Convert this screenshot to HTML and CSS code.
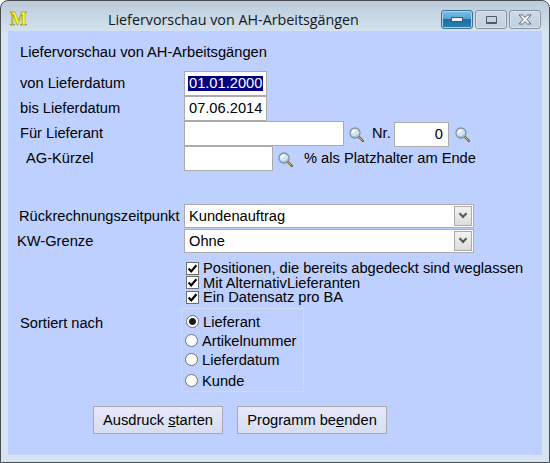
FILE: index.html
```html
<!DOCTYPE html>
<html lang="de">

<head>
    <meta charset="UTF-8">
    <title>Liefervorschau von AH-Arbeitsgängen</title>
    <link rel="stylesheet" href="styles.css">
</head>

<body>
    <svg class="defs" width="0" height="0">
        <defs>
            <symbol id="lens" viewBox="0 0 15 15">
                <line x1="9.5" y1="9.5" x2="14" y2="14" stroke="#7a5a20" stroke-width="2.4" stroke-linecap="round"/>
                <line x1="10" y1="10" x2="13.6" y2="13.6" stroke="#e0b860" stroke-width="1"/>
                <circle cx="6" cy="6" r="5" fill="#d4e6f2" stroke="#7f919f" stroke-width="1.3"/>
                <path d="M2.6 6 A3.4 3.4 0 0 1 6 2.6 L6 4.4 A2 2 0 0 0 4.2 6 Z" fill="#fff"/>
                <path d="M3.5 8.8 A4 4 0 0 0 9.6 6.4" fill="none" stroke="#9fc0da" stroke-width="1.2"/>
            </symbol>
            <symbol id="tick" viewBox="0 0 13 13">
                <path d="M2.6 6.6 L5.2 9.4 L10.4 3.2" fill="none" stroke="#000" stroke-width="2.2"/>
            </symbol>
        </defs>
    </svg>

    <div class="window">
        <div class="titlebar">
            <span class="app-logo">M</span>
            <span class="title">Liefervorschau von AH-Arbeitsgängen</span>
            <div class="win-buttons">
                <div class="win-btn win-min"><span class="glyph-min"></span></div>
                <div class="win-btn"><span class="glyph-max"></span></div>
                <div class="win-btn">
                    <svg width="16" height="11" viewBox="0 0 16 11">
                        <path d="M2 1 H5.5 L8 3.4 L10.5 1 H14 L10 5.5 L14 10 H10.5 L8 7.6 L5.5 10 H2 L6 5.5 Z" fill="#f4f6f8" stroke="#5c6672" stroke-width="1"/>
                    </svg>
                </div>
            </div>
        </div>

        <div class="client">
            <div class="heading">Liefervorschau von AH-Arbeitsgängen</div>

            <div class="rows">
                <div class="row">
                    <label class="label">von Lieferdatum</label>
                    <div class="field w-date"><span class="selected">01.01.2000</span></div>
                </div>
                <div class="row">
                    <label class="label">bis Lieferdatum</label>
                    <div class="field w-date">07.06.2014</div>
                </div>
                <div class="row">
                    <label class="label">Für Lieferant</label>
                    <div class="field w-supplier"></div>
                    <svg class="lens"><use href="#lens"/></svg>
                    <span class="nr-label">Nr.</span>
                    <div class="field w-nr">0</div>
                    <svg class="lens"><use href="#lens"/></svg>
                </div>
                <div class="row">
                    <label class="label indent">AG-Kürzel</label>
                    <div class="field w-short"></div>
                    <svg class="lens"><use href="#lens"/></svg>
                    <span class="hint">% als Platzhalter am Ende</span>
                </div>
            </div>

            <div class="selects">
                <div class="row select-row">
                    <label class="label nudge">Rückrechnungszeitpunkt</label>
                    <div class="field w-select">Kundenauftrag<span class="arrow"></span></div>
                </div>
                <div class="row select-row">
                    <label class="label outdent">KW-Grenze</label>
                    <div class="field w-select">Ohne<span class="arrow"></span></div>
                </div>
            </div>

            <div class="checks">
                <div class="check"><span class="box"><svg width="13" height="13"><use href="#tick"/></svg></span>Positionen, die bereits abgedeckt sind weglassen</div>
                <div class="check"><span class="box"><svg width="13" height="13"><use href="#tick"/></svg></span>Mit AlternativLieferanten</div>
                <div class="check"><span class="box"><svg width="13" height="13"><use href="#tick"/></svg></span>Ein Datensatz pro BA</div>
            </div>

            <div class="sort">
                <div class="sort-label">Sortiert nach</div>
                <div class="radio-group">
                    <div class="radio radio-on"><span class="dot"></span>Lieferant</div>
                    <div class="radio"><span class="dot"></span>Artikelnummer</div>
                    <div class="radio"><span class="dot"></span>Lieferdatum</div>
                    <div class="radio radio-last"><span class="dot"></span>Kunde</div>
                </div>
            </div>

            <div class="actions">
                <button class="btn btn-print">Ausdruck <u>s</u>tarten</button>
                <button class="btn btn-quit">Programm be<u>e</u>nden</button>
            </div>
        </div>
    </div>
</body>

</html>
```

FILE: styles.css
```css
body {
    margin: 0;
    background-color: #fff;
    font-family: "Liberation Sans", Arial, sans-serif;
    font-size: 14.67px;
    color: #000;
}

.defs {
    position: absolute;
}

.window {
    box-sizing: border-box;
    width: 550px;
    height: 463px;
    border: 1px solid #4a4e54;
    border-radius: 8px 8px 0 0;
    background: linear-gradient(#bccbd9 0, #d7e5f3 34px);
    overflow: hidden;
}

.titlebar {
    display: flex;
    align-items: center;
    height: 30px;
    position: relative;
}

.app-logo {
    margin-left: 9px;
    margin-top: 6px;
    font-family: "Liberation Serif", serif;
    font-weight: bold;
    font-size: 18px;
    line-height: 17px;
    color: #ffff20;
    -webkit-text-stroke: 0.5px #77771a;
}

.title {
    margin-left: 81px;
    margin-top: 6px;
    font-family: "Open Sans", sans-serif;
    font-size: 14.3px;
    color: #10181f;
    white-space: nowrap;
}

.win-buttons {
    position: absolute;
    top: 9px;
    right: 8px;
    display: flex;
    gap: 2px;
}

.win-btn {
    box-sizing: border-box;
    width: 32px;
    height: 19px;
    display: flex;
    align-items: center;
    justify-content: center;
    border: 1px solid #8592a6;
    border-radius: 3px;
    background: linear-gradient(#ccd9e6, #c2d0de);
    box-shadow: inset 0 0 0 1px #d9e3ee;
}

.win-min {
    border-color: #3b6f94;
    background: linear-gradient(#7cc0e8 0, #58a4d4 45%, #1f6da4 50%, #2a80b4 100%);
    box-shadow: inset 0 0 0 1px #a4d4ee;
}

.glyph-min {
    width: 10px;
    height: 3px;
    background-color: #eef2f6;
    border: 1px solid #3c5a74;
}

.glyph-max {
    box-sizing: border-box;
    width: 11px;
    height: 8px;
    border-style: solid;
    border-color: #4f5965;
    border-width: 1px 1px 2px;
    border-radius: 1px;
    background-color: #c5d2df;
}

.client {
    margin: 0 7px;
    height: 424px;
    background-color: #bdd0ff;
    display: flow-root;
}

.heading {
    margin: 9px 0 7px 12px;
    height: 24px;
    line-height: 24px;
}

.row {
    display: flex;
    align-items: center;
    height: 25px;
    padding-left: 12px;
}

.label {
    width: 164px;
    flex: none;
    white-space: nowrap;
    margin-top: -2px;
}

.indent {
    padding-left: 6px;
    width: 158px;
}

.nudge {
    margin-left: -1px;
    width: 165px;
}

.outdent {
    margin-left: -3px;
    width: 167px;
}

.field {
    box-sizing: border-box;
    height: 25px;
    line-height: 23px;
    padding: 0 4px;
    background-color: #fff;
    border: 1px solid #ababab;
    flex: none;
    position: relative;
}

.w-date { width: 83px; }
.w-supplier { width: 160px; }
.w-short { width: 89px; }

.w-nr {
    width: 55px;
    text-align: right;
    padding-right: 5px;
    margin-top: 1px;
}

.selected {
    background-color: #000080;
    color: #fff;
    display: inline-block;
    line-height: 15px;
    padding: 0 1px;
    margin-left: -1px;
}

.lens {
    width: 15px;
    height: 15px;
    flex: none;
    margin-left: 5px;
    margin-top: 2px;
}

.w-nr + .lens {
    margin-left: 6px;
}

.nr-label {
    margin-left: 8px;
    width: 22px;
    margin-top: -2px;
}

.hint {
    margin-left: 11px;
    margin-top: -1px;
    white-space: nowrap;
}

.selects {
    margin-top: 33px;
}

.select-row {
    height: 24px;
    margin-bottom: 1px;
}

.select-row .label {
    margin-top: -1px;
}

.w-select {
    width: 290px;
    height: 24px;
    line-height: 22px;
}

.arrow {
    box-sizing: border-box;
    position: absolute;
    top: 1px;
    right: 1px;
    width: 18px;
    height: 20px;
    border: 1px solid #ababab;
    background: linear-gradient(#f2f2f2, #dcdcdc);
}

.arrow::after {
    content: "";
    position: absolute;
    left: 5px;
    top: 4px;
    width: 6px;
    height: 6px;
    border-right: 2px solid #555;
    border-bottom: 2px solid #555;
    box-sizing: border-box;
    transform: rotate(45deg);
}

.checks {
    margin: 8px 0 0 178px;
}

.check {
    display: flex;
    align-items: center;
    height: 14.5px;
    white-space: nowrap;
}

.box {
    box-sizing: border-box;
    width: 13px;
    height: 13px;
    margin-right: 4px;
    flex: none;
    border: 1px solid #6e6e6e;
    background-color: #fff;
    display: flex;
    align-items: center;
    justify-content: center;
}

.box svg {
    flex: none;
}

.sort {
    display: flex;
    margin: 3.5px 0 0 12px;
}

.sort-label {
    width: 161px;
    flex: none;
    margin-top: 7px;
}

.radio-group {
    box-sizing: border-box;
    width: 123px;
    height: 84px;
    border: 1px solid #d2d9ea;
    padding: 3px 0 0 3px;
}

.radio {
    display: flex;
    align-items: center;
    height: 19px;
    white-space: nowrap;
}

.radio-last {
    margin-top: 2px;
}

.dot {
    box-sizing: border-box;
    width: 13px;
    height: 13px;
    margin-right: 4px;
    border: 1px solid #707070;
    border-radius: 50%;
    background-color: #fff;
    flex: none;
}

.radio-on {
    padding-left: 1px;
}

.radio-on .dot {
    background: radial-gradient(circle, #111 0, #222 3px, #fff 4px);
}

.actions {
    display: flex;
    gap: 14px;
    margin: 14px 0 0 85px;
}

.btn {
    box-sizing: border-box;
    height: 28px;
    padding: 0;
    border: 1px solid #a9a9a9;
    background: linear-gradient(#e6e9f9, #d8ddf1);
    font-family: inherit;
    font-size: inherit;
    color: #000;
}

.btn-print { width: 130px; }
.btn-quit { width: 150px; }
```
